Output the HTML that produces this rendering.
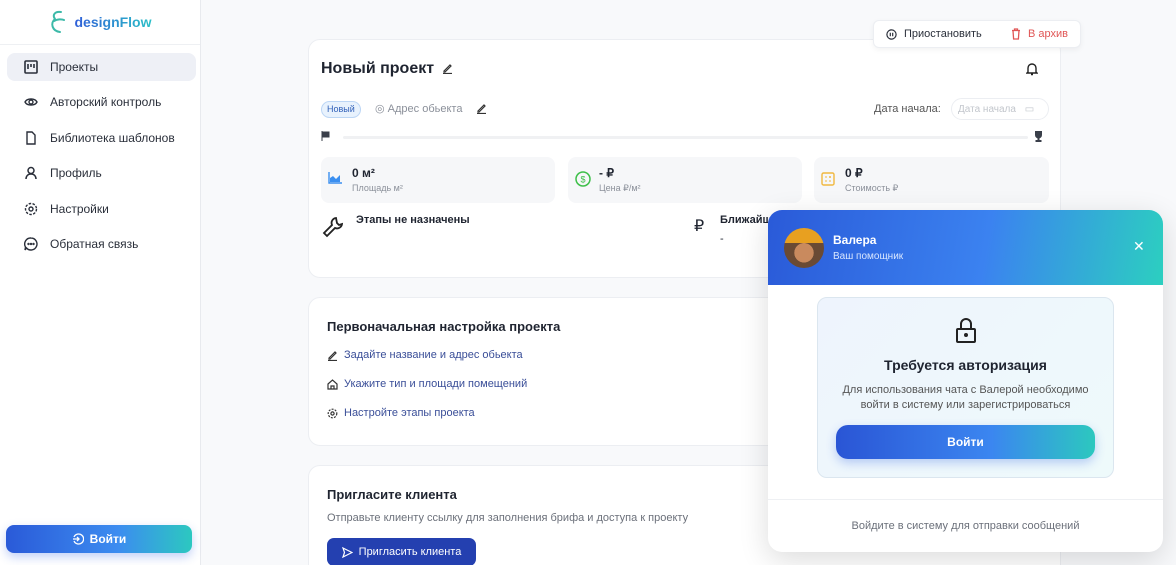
<!DOCTYPE html>
<html><head><meta charset="utf-8"><style>
*{box-sizing:border-box;margin:0;padding:0}
html,body{width:1176px;height:565px;overflow:hidden}
body{font-family:"Liberation Sans",sans-serif;background:#f8f9fb;position:relative;color:#1f2430}
.side{position:absolute;left:0;top:0;width:201px;height:565px;background:#fff;border-right:1px solid #e8eaee}
.logo{height:45px;border-bottom:1px solid #eef0f3;display:flex;align-items:center;justify-content:center;gap:8px}
.logo span{font-weight:bold;font-size:14px;background:linear-gradient(90deg,#2f5fd8,#2bc0c8);-webkit-background-clip:text;color:transparent}
.nav{position:absolute;left:7px;width:189px;height:28px;display:flex;align-items:center;font-size:12px;color:#2a2f3a;border-radius:8px}
.nav svg{position:absolute;left:17px}
.nav b{font-weight:normal;position:absolute;left:43px}
.btn{position:absolute;left:6px;top:525px;width:186px;height:28px;border-radius:8px;background:linear-gradient(90deg,#2a5ad8,#3c8cf0 60%,#2cc8c0);color:#fff;font-weight:bold;font-size:12px;display:flex;align-items:center;justify-content:center;gap:6px;box-shadow:0 4px 10px rgba(50,100,230,.3)}
.card{position:absolute;left:308px;width:753px;background:#fff;border:1px solid #eceef2;border-radius:12px}
.stat{position:absolute;top:117px;height:46px;background:#f6f7f9;border-radius:8px}
.stat .v{position:absolute;left:31px;top:9px;font-weight:bold;font-size:12px}
.stat .l{position:absolute;left:31px;top:26px;font-size:9px;color:#8b909a}
.stat svg{position:absolute;left:7px;top:15px}
.link{position:absolute;left:18px;font-size:11px;color:#3a4e98;display:flex;align-items:center;gap:6px}
</style></head><body>
<div class="side">
 <div class="logo"><svg width="18" height="26" viewBox="0 0 18 26"><path d="M12 3C6 2 3 6 6 10M5 12c3-2 8-2 10-1M6 10c-5 4-3 12 5 13" stroke="#3cb9a8" stroke-width="2" fill="none" stroke-linecap="round"/></svg><span>designFlow</span></div>
 <div class="nav" style="top:53px;background:#eef0f6"><svg width="14" height="14" viewBox="0 0 14 14" fill="none" stroke="#2a2f3a" stroke-width="1.6"><rect x="1" y="1" width="12" height="12" rx="1"/><path d="M4 4v5M7 4v3M10 4v4"/></svg><b>Проекты</b></div>
 <div class="nav" style="top:88px"><svg width="14" height="14" viewBox="0 0 14 14" fill="none" stroke="#2a2f3a" stroke-width="1.4"><path d="M1 7c2-4 10-4 12 0c-2 4-10 4-12 0z"/><circle cx="7" cy="7" r="2"/></svg><b>Авторский контроль</b></div>
 <div class="nav" style="top:124px"><svg width="14" height="14" viewBox="0 0 14 14" fill="none" stroke="#2a2f3a" stroke-width="1.4"><path d="M3 1h5l3 3v9H3z"/></svg><b>Библиотека шаблонов</b></div>
 <div class="nav" style="top:159px"><svg width="14" height="14" viewBox="0 0 14 14" fill="none" stroke="#2a2f3a" stroke-width="1.5"><circle cx="7" cy="4.5" r="3"/><path d="M2 13c0-3 2-5 5-5s5 2 5 5"/></svg><b>Профиль</b></div>
 <div class="nav" style="top:195px"><svg width="14" height="14" viewBox="0 0 14 14" fill="none" stroke="#2a2f3a" stroke-width="1.4"><circle cx="7" cy="7" r="2"/><circle cx="7" cy="7" r="5.5" stroke-dasharray="2.5 1.4"/></svg><b>Настройки</b></div>
 <div class="nav" style="top:230px"><svg width="14" height="14" viewBox="0 0 14 14" fill="none" stroke="#2a2f3a" stroke-width="1.4"><path d="M7 1a6 6 0 1 1-4.5 10L1 13l.5-3A6 6 0 0 1 7 1z"/><circle cx="4.5" cy="7" r=".5"/><circle cx="7" cy="7" r=".5"/><circle cx="9.5" cy="7" r=".5"/></svg><b>Обратная связь</b></div>
 <div class="btn"><svg width="12" height="12" viewBox="0 0 12 12" fill="none" stroke="#fff" stroke-width="1.3"><path d="M2 4a5 5 0 1 1 0 4M1 6h6M5 4l2 2-2 2"/></svg>Войти</div>
</div>

<div class="card" style="top:39px;height:239px">
 <div style="position:absolute;left:12px;top:20px;font-size:16px;font-weight:bold">Новый проект</div>
 <svg style="position:absolute;left:133px;top:23px" width="11" height="11" viewBox="0 0 11 11" fill="none" stroke="#333" stroke-width="1.2"><path d="M2 8l6-6 1 1-6 6H2zM1 10.5h9"/></svg>
 <svg style="position:absolute;left:717px;top:22px" width="12" height="14" viewBox="0 0 12 14" fill="none" stroke="#222" stroke-width="1.4"><path d="M2 10V6a4 4 0 0 1 8 0v4l1 1H1zM5 12.5h2"/></svg>
 <div style="position:absolute;left:12px;top:61px;height:17px;padding:0 5px;border:1px solid #bcd6f5;background:#e8f2fd;border-radius:9px;font-size:9px;color:#2f5fb8;line-height:15px">Новый</div>
 <div style="position:absolute;left:66px;top:62px;font-size:11px;color:#8b909a">◎ Адрес обьекта</div>
 <svg style="position:absolute;left:167px;top:63px" width="11" height="11" viewBox="0 0 11 11" fill="none" stroke="#333" stroke-width="1.2"><path d="M2 8l6-6 1 1-6 6H2zM1 10.5h9"/></svg>
 <div style="position:absolute;left:565px;top:63px;font-size:11px;color:#555">Дата начала:</div>
 <div style="position:absolute;left:642px;top:58px;width:98px;height:22px;border:1px solid #eceef2;border-radius:11px;font-size:10px;color:#c2c6cc;padding:5px 0 0 6px">Дата начала <span style="margin-left:6px">▭</span></div>
 <svg style="position:absolute;left:12px;top:91px" width="10" height="10" viewBox="0 0 10 10"><path d="M1 0v10M1 1h7v5H1" fill="#3a3f4a" stroke="#3a3f4a"/></svg>
 <div style="position:absolute;left:34px;top:96px;width:685px;height:3px;background:#f0f1f3;border-radius:2px"></div>
 <svg style="position:absolute;left:724px;top:91px" width="11" height="11" viewBox="0 0 11 11" fill="#3a3f4a"><path d="M2 0h7v4a3.5 3.5 0 0 1-7 0zM4.5 7h2v2h2v2h-6V9h2z"/></svg>
 <div class="stat" style="left:12px;width:234px"><svg width="14" height="12" viewBox="0 0 14 12"><path d="M1 0v11h13" stroke="#3b8ff0" fill="none" stroke-width="1.4"/><path d="M2 10V6l3-2 3 3 4-4v7z" fill="#3b8ff0"/></svg><div class="v">0 м²</div><div class="l">Площадь м²</div></div>
 <div class="stat" style="left:259px;width:234px"><svg width="16" height="16" viewBox="0 0 16 16" style="top:14px"><circle cx="8" cy="8" r="7" fill="none" stroke="#3cbf48" stroke-width="1.5"/><text x="8" y="11.5" font-size="9" text-anchor="middle" fill="#3cbf48" font-family="Liberation Sans">$</text></svg><div class="v">- ₽</div><div class="l">Цена ₽/м²</div></div>
 <div class="stat" style="left:505px;width:235px"><svg width="14" height="14" viewBox="0 0 14 14"><rect x="1" y="1" width="12" height="12" rx="1.5" fill="none" stroke="#f0b840" stroke-width="1.4"/><path d="M4 5h2M4 9h2M8 9h2M9 4v2M8 5h2" stroke="#f0b840"/></svg><div class="v">0 ₽</div><div class="l">Стоимость ₽</div></div>
 <svg style="position:absolute;left:13px;top:176px" width="22" height="22" viewBox="0 0 22 22" fill="none" stroke="#222" stroke-width="1.8"><path d="M14 2a5 5 0 0 0-4 7L2 17l3 3 8-8a5 5 0 0 0 7-4l-3 1-2-2z"/></svg>
 <div style="position:absolute;left:47px;top:174px;font-size:11px;font-weight:bold">Этапы не назначены</div>
 <div style="position:absolute;left:385px;top:176px;font-size:16px">₽</div>
 <div style="position:absolute;left:411px;top:174px;font-size:11px;font-weight:bold">Ближайший</div>
 <div style="position:absolute;left:411px;top:193px;font-size:11px">-</div>
</div>

<div style="position:absolute;left:873px;top:20px;width:208px;height:28px;background:#fff;border:1px solid #eceef2;border-radius:6px;box-shadow:0 2px 6px rgba(0,0,0,.05);font-size:11px">
 <svg style="position:absolute;left:12px;top:8px" width="11" height="11" viewBox="0 0 11 11" fill="none" stroke="#2a2f3a" stroke-width="1.2"><circle cx="5.5" cy="5.5" r="4.6"/><path d="M4.3 3.7v3.6M6.7 3.7v3.6"/></svg>
 <span style="position:absolute;left:30px;top:7px;color:#2a2f3a">Приостановить</span>
 <svg style="position:absolute;left:137px;top:7px" width="10" height="12" viewBox="0 0 10 12" fill="none" stroke="#e05555" stroke-width="1.3"><path d="M1 2.5h8M3.5 2.5V1h3v1.5M2 2.5l.6 8.5h4.8L8 2.5"/></svg>
 <span style="position:absolute;left:154px;top:7px;color:#e05555">В архив</span>
</div>

<div class="card" style="top:297px;height:149px">
 <div style="position:absolute;left:18px;top:21px;font-size:13px;font-weight:bold">Первоначальная настройка проекта</div>
 <div class="link" style="top:51px"><svg width="11" height="11" viewBox="0 0 11 11" fill="none" stroke="#333" stroke-width="1.2"><path d="M2 8l6-6 1 1-6 6H2zM1 10.5h9"/></svg>Задайте название и адрес обьекта</div>
 <div class="link" style="top:80px"><svg width="11" height="11" viewBox="0 0 11 11" fill="none" stroke="#333" stroke-width="1.2"><path d="M1 5l4.5-4 4.5 4v5H1zM4 10V7h3v3"/></svg>Укажите тип и площади помещений</div>
 <div class="link" style="top:109px"><svg width="11" height="11" viewBox="0 0 11 11" fill="none" stroke="#333" stroke-width="1.2"><circle cx="5.5" cy="5.5" r="1.6"/><circle cx="5.5" cy="5.5" r="4.3" stroke-dasharray="2 1.2"/></svg>Настройте этапы проекта</div>
</div>

<div class="card" style="top:465px;height:120px">
 <div style="position:absolute;left:18px;top:21px;font-size:13px;font-weight:bold">Пригласите клиента</div>
 <div style="position:absolute;left:18px;top:46px;font-size:11px;color:#6b707a">Отправьте клиенту ссылку для заполнения брифа и доступа к проекту</div>
 <div style="position:absolute;left:18px;top:72px;width:149px;height:28px;background:#2440b0;border-radius:7px;color:#fff;font-size:11px;display:flex;align-items:center;justify-content:center;gap:6px"><svg width="11" height="11" viewBox="0 0 11 11" fill="none" stroke="#fff" stroke-width="1.2"><path d="M1 1l9 4.5L1 10l1.5-4.5z"/></svg>Пригласить клиента</div>
</div>

<div style="position:absolute;left:768px;top:210px;width:395px;height:342px;background:#fff;border-radius:14px;box-shadow:0 8px 30px rgba(0,0,0,.14);overflow:hidden">
 <div style="height:75px;background:linear-gradient(100deg,#2a5ad8,#3b82f0 55%,#2ccfc0)">
  <div style="position:absolute;left:16px;top:18px;width:40px;height:40px;border-radius:50%;background:radial-gradient(circle at 50% 62%,#c98a5e 0 30%,transparent 31%),linear-gradient(#e8a020 0 38%,#6a4a34 38%)"></div>
  <div style="position:absolute;left:65px;top:23px;color:#fff;font-weight:bold;font-size:12px">Валера</div>
  <div style="position:absolute;left:65px;top:41px;color:#d8e6ff;font-size:10px">Ваш помощник</div>
  <div style="position:absolute;left:365px;top:28px;color:#fff;font-size:14px">✕</div>
 </div>
 <div style="position:absolute;left:49px;top:87px;width:297px;height:181px;border:1px solid #dbe6ef;border-radius:10px;background:linear-gradient(135deg,#eef4fd,#eefafb)">
  <svg style="position:absolute;left:137px;top:20px" width="22" height="26" viewBox="0 0 22 26" fill="none" stroke="#222" stroke-width="2"><rect x="2" y="11" width="18" height="13" rx="1"/><path d="M6 11V6a5 5 0 0 1 10 0v5"/><circle cx="11" cy="17" r="1" fill="#222"/></svg>
  <div style="position:absolute;width:100%;top:59px;text-align:center;font-weight:bold;font-size:14px">Требуется авторизация</div>
  <div style="position:absolute;width:100%;top:85px;text-align:center;font-size:11px;color:#555;line-height:15px">Для использования чата с Валерой необходимо<br>войти в систему или зарегистрироваться</div>
  <div style="position:absolute;left:18px;top:127px;width:259px;height:34px;border-radius:12px;background:linear-gradient(90deg,#2a55d5,#3b86f0 60%,#2cc8bf);color:#fff;font-weight:bold;font-size:12px;text-align:center;line-height:34px;box-shadow:0 4px 10px rgba(50,100,230,.3)">Войти</div>
 </div>
 <div style="position:absolute;left:0;top:289px;width:100%;border-top:1px solid #eef0f3"></div>
 <div style="position:absolute;width:100%;top:310px;text-align:center;font-size:11px;color:#6b707a">Войдите в систему для отправки сообщений</div>
</div>
</body></html>
